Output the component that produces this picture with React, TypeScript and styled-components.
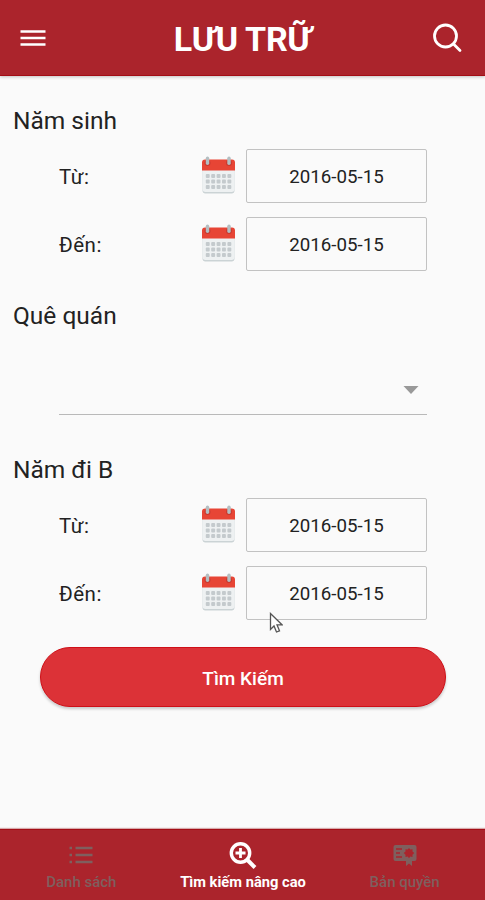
import React from "react";
import styled, { createGlobalStyle } from "styled-components";

const GlobalStyle = createGlobalStyle`
  *, *::before, *::after { box-sizing: border-box; }
  html, body { margin: 0; padding: 0; }
  body { background: #fafafa; overflow: hidden; }
  button { font: inherit; }
`;

const Screen = styled.div`
  width: 100%;
  height: 900px;
  display: flex;
  flex-direction: column;
  background: #fafafa;
  color: #222;
  font-family: Roboto, "Noto Sans", sans-serif;
`;

const Header = styled.header`
  height: 76px;
  flex: none;
  display: grid;
  grid-template-columns: 66px 1fr 76px;
  align-items: center;
  background: #ab242c;
  border-bottom: 1px solid #a30d15;
  box-shadow: 0 1px 3px rgba(0, 0, 0, 0.22);
`;

const Title = styled.h1`
  margin: 2px 0 0;
  padding-left: 10px;
  text-align: center;
  color: #fff;
  font-size: 34px;
  line-height: 44px;
  font-weight: 700;
  letter-spacing: -0.3px;
  white-space: nowrap;
`;

const IconButton = styled.button`
  display: flex;
  align-items: center;
  justify-content: center;
  height: 75px;
  padding: 0;
  border: 0;
  background: none;
  color: #fff;
`;

const Content = styled.main`
  flex: 1;
  display: flex;
  flex-direction: column;
  padding-top: 30px;
`;

const Section = styled.section<{ $height: number }>`
  height: ${(p) => p.$height}px;
  padding: 0 58px 0 59px;
`;

const SectionTitle = styled.h2`
  margin: 0 0 0 -46px;
  font-size: 24.5px;
  line-height: 30px;
  font-weight: 400;
`;

const Fields = styled.div`
  display: flex;
  flex-direction: column;
  gap: 13px;
  margin-top: 13px;
`;

const DateRow = styled.div`
  display: grid;
  grid-template-columns: 142px 45px 181px;
  align-items: center;
  height: 54.5px;
`;

const FieldLabel = styled.span`
  padding-top: 2px;
  font-size: 20.5px;
  line-height: 24px;
  letter-spacing: 0.5px;
`;

const DateBox = styled.div`
  height: 54px;
  display: flex;
  align-items: center;
  justify-content: center;
  border: 1.5px solid #c2c2c2;
  border-radius: 2px;
  padding-top: 2px;
  font-size: 18.7px;
`;

const SelectField = styled.div`
  height: 84px;
  display: flex;
  justify-content: flex-end;
  padding: 55px 8px 0 0;
  border-bottom: 1px solid #b9b9b9;
`;

const SubmitButton = styled.button`
  width: 406px;
  height: 60px;
  margin: 0 0 0 40px;
  padding: 3px 0 0;
  border: 1px solid #cf0f17;
  border-radius: 30px;
  background: #dc3237;
  color: #fff;
  font-size: 19px;
  font-weight: 500;
  box-shadow: 0 2px 3px rgba(0, 0, 0, 0.2);
`;

const TabBar = styled.nav`
  height: 71px;
  flex: none;
  display: grid;
  grid-template-columns: repeat(3, 1fr);
  background: #ab242c;
  border-top: 1px solid #a30d15;
  box-shadow: 0 -1px 1px rgba(150, 20, 25, 0.35);
`;

const Tab = styled.a<{ $active?: boolean }>`
  display: flex;
  flex-direction: column;
  align-items: center;
  padding: 10px 0 0 1px;
  gap: 4px;
  color: ${(p) => (p.$active ? "#fff" : "#7f5f5e")};
  font-size: ${(p) => (p.$active ? 14.7 : 15)}px;
  line-height: 18px;
  font-weight: ${(p) => (p.$active ? 700 : 500)};
  white-space: nowrap;
`;

const TabIcon = styled.span`
  height: 29px;
  display: flex;
  align-items: center;
`;

const Pointer = styled.svg`
  position: absolute;
  left: 269px;
  top: 612px;
`;

const CalendarSvg = styled.svg`
  margin-bottom: 0.5px;
`;

const CalendarIcon = () => (
  <CalendarSvg width="35" height="40" viewBox="0 0 35 40">
    <path d="M1.5 12h32v22.5a3 3 0 0 1-3 3h-26a3 3 0 0 1-3-3z" fill="#cbd3d5" />
    <path d="M1.5 12h32v21a3 3 0 0 1-3 3h-26a3 3 0 0 1-3-3z" fill="#eef1f2" />
    <path d="M1 14.500V6.500a3 3 0 0 1 3-3h27a3 3 0 0 1 3 3v8z" fill="#e74535" />
    {[6.5, 28].map((x) => (
      <g key={x}>
        <circle cx={x} cy="7" r="3" fill="#c93a30" />
        <rect x={x - 1.7} y="0.500" width="3.400" height="8.500" rx="1.700" fill="#b4bec1" />
      </g>
    ))}
    {[18, 23.5, 29].map((y) =>
      [4.8, 10.2, 15.6, 21, 26.4].map((x) => (
        <rect key={`${x}-${y}`} x={x} y={y} width="3.900" height="3.900" rx="0.900" fill="#c4cacd" />
      ))
    )}
  </CalendarSvg>
);

const MenuIcon = () => (
  <svg width="26" height="20" viewBox="0 0 26 20" fill="none" stroke="currentColor" strokeWidth="2.600">
    <path d="M.5 3.500h25M.5 10h25M.5 16.500h25" />
  </svg>
);

const SearchIcon = () => (
  <svg width="30" height="30" viewBox="0 0 30 30" fill="none" stroke="currentColor" strokeWidth="2.800" strokeLinecap="round">
    <circle cx="13.500" cy="13" r="11" />
    <path d="m21.500 21 6.500 6.500" />
  </svg>
);

const ListIcon = () => (
  <svg width="24" height="20" viewBox="0 0 24 20" stroke="currentColor" strokeWidth="2.400">
    <path d="M.5 3h2.500M6.500 3h17M.5 10h2.500M6.500 10h17M.5 17h2.500M6.500 17h17" />
  </svg>
);

const ZoomInIcon = () => (
  <svg width="28" height="28" viewBox="0 0 28 28" fill="none" stroke="currentColor">
    <circle cx="11.500" cy="12" r="9.200" strokeWidth="3.400" />
    <path d="M11.500 7v10M6.500 12h10" strokeWidth="2.800" />
    <path d="m18 18.500 8 8" strokeWidth="4" />
  </svg>
);

const LicenseIcon = () => (
  <svg width="24" height="24" viewBox="0 0 24 24">
    <path d="M2.500 2h19Q23.500 2 23.500 4v12Q23.500 18 21.500 18H19v5l-3-2.500-3 2.500v-5H2.500Q.5 18 .5 16V4Q.5 2 2.500 2z" fill="currentColor" />
    <path d="M3 6h6M3 10h4M3 14h6" stroke="#ab242c" strokeWidth="1.400" />
    <path d="m16 5 1.300 1.600 2.200-.4v2.200l1.800 1.700-1.800 1.700V14l-2.200-.4L16 15.200l-1.300-1.600-2.200.4v-2.200l-1.800-1.700 1.800-1.700V6.200l2.200.4z" fill="#ab242c" />
  </svg>
);

const DateField = ({ label }: { label: string }) => (
  <DateRow>
    <FieldLabel>{label}</FieldLabel>
    <CalendarIcon />
    <DateBox>2016-05-15</DateBox>
  </DateRow>
);

const DateSection = ({ title, height }: { title: string; height: number }) => (
  <Section $height={height}>
    <SectionTitle>{title}</SectionTitle>
    <Fields>
      <DateField label="Từ:" />
      <DateField label="Đến:" />
    </Fields>
  </Section>
);

export default function App() {
  return (
    <>
      <GlobalStyle />
      <Screen>
        <Header>
          <IconButton aria-label="Menu"><MenuIcon /></IconButton>
          <Title>LƯU TRỮ</Title>
          <IconButton aria-label="Search"><SearchIcon /></IconButton>
        </Header>
        <Content>
          <DateSection title="Năm sinh" height={195} />
          <Section $height={154}>
            <SectionTitle>Quê quán</SectionTitle>
            <SelectField>
              <svg width="16" height="9" viewBox="0 0 16 9"><path d="M.5 0h15L8 8z" fill="#999" /></svg>
            </SelectField>
          </Section>
          <DateSection title="Năm đi B" height={192} />
          <SubmitButton>Tìm Kiếm</SubmitButton>
        </Content>
        <TabBar>
          <Tab><TabIcon><ListIcon /></TabIcon>Danh sách</Tab>
          <Tab $active><TabIcon><ZoomInIcon /></TabIcon>Tìm kiếm nâng cao</Tab>
          <Tab><TabIcon><LicenseIcon /></TabIcon>Bản quyền</Tab>
        </TabBar>
        <Pointer width="14" height="22" viewBox="0 0 14 22">
          <path d="M1.500 1.500v16l3.500-3.500 2.500 6 3-1.200-2.500-6h5z" fill="#fff" stroke="#555" strokeWidth="1.300" />
        </Pointer>
      </Screen>
    </>
  );
}
